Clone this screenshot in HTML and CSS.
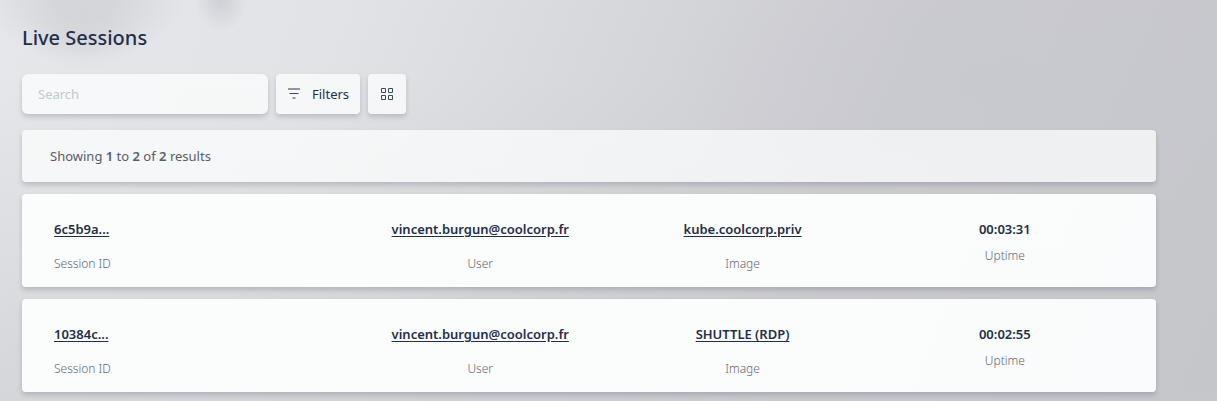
FILE: index.html
```html
<!DOCTYPE html>
<html lang="en">
<head>
<meta charset="utf-8">
<meta name="viewport" content="width=device-width, initial-scale=1">
<title>Live Sessions</title>
<link rel="stylesheet" href="styles.css">
</head>
<body>
<main class="page">
  <h1 class="title">Live Sessions</h1>
  <div class="toolbar">
    <input class="search surface" type="search" placeholder="Search" aria-label="Search">
    <button class="button surface" type="button">
      <svg class="icon" width="14" height="14" viewBox="0 0 14 14" fill="none" stroke="currentColor" aria-hidden="true"><path d="M1 2h12" stroke-width="1.4" stroke-opacity=".8"/><path d="M2.5 6.5h9"/><path d="M5.5 11h3" stroke-width="1.4" stroke-opacity=".8"/></svg>
      Filters
    </button>
    <button class="button button-icon surface" type="button" aria-label="Grid view">
      <svg class="icon" width="14" height="14" viewBox="0 0 14 14" fill="none" stroke="currentColor" aria-hidden="true"><path d="M1.5 1.5h4v4h-4zM8.5 1.5h4v4h-4zM1.5 8.5h4v4h-4zM8.5 8.5h4v4h-4z"/></svg>
    </button>
  </div>
  <p class="summary surface">Showing <strong>1</strong> to <strong>2</strong> of <strong>2</strong> results</p>
  <ul class="sessions">
    <li class="session surface">
      <div class="cell cell-start"><a class="value" href="#session-6c5b9a">6c5b9a...</a><span class="label">Session ID</span></div>
      <div class="cell"><a class="value" href="#user">vincent.burgun@coolcorp.fr</a><span class="label">User</span></div>
      <div class="cell"><a class="value" href="#kube">kube.coolcorp.priv</a><span class="label">Image</span></div>
      <div class="cell cell-tight"><span class="value">00:03:31</span><span class="label">Uptime</span></div>
    </li>
    <li class="session surface">
      <div class="cell cell-start"><a class="value" href="#session-10384c">10384c...</a><span class="label">Session ID</span></div>
      <div class="cell"><a class="value" href="#user">vincent.burgun@coolcorp.fr</a><span class="label">User</span></div>
      <div class="cell"><a class="value" href="#shuttle">SHUTTLE (RDP)</a><span class="label">Image</span></div>
      <div class="cell cell-tight"><span class="value">00:02:55</span><span class="label">Uptime</span></div>
    </li>
  </ul>
</main>
</body>
</html>
```
FILE: styles.css
```css
* {
  box-sizing: border-box;
}

body {
  margin: 0;
  min-height: 100vh;
  font-family: "Noto Sans", "Open Sans", sans-serif;
  font-size: 13px;
  line-height: 20px;
  color: #1f2f4a;
  background:
    radial-gradient(ellipse 100px 60px at 84px 0, rgba(208, 209, 213, 0.75) 30%, transparent 100%),
    radial-gradient(ellipse 60px 34px at 82px 36px, rgba(208, 209, 213, 0.5), transparent),
    radial-gradient(ellipse 26px 32px at 221px 0, rgba(204, 205, 213, 0.8) 10%, transparent),
    radial-gradient(ellipse 340px 150px at 1010px 80px, rgba(200, 200, 210, 0.6), transparent),
    linear-gradient(to bottom, transparent 20%, rgba(198, 199, 203, 0.5) 100%),
    linear-gradient(112deg, #e6e7ea 0%, #e2e3e6 25%, #d5d6da 48%, #cacacf 68%, #c5c6ca 100%);
}

.page {
  padding: 24px 61px 9px 22px;
}

.surface {
  border: 0;
  border-radius: 4px;
  background: rgba(254, 255, 255, 0.73);
  box-shadow: 0 3px 5px rgba(60, 64, 80, 0.22);
}

.title {
  margin: 0 0 22px;
  font-size: 20px;
  line-height: 28px;
  font-weight: 500;
}

.toolbar {
  display: flex;
  gap: 8px;
  margin-bottom: 16px;
}

.search {
  width: 246px;
  height: 40px;
  padding: 0 16px;
  border-radius: 6px;
  font: inherit;
  color: inherit;
}

.search::placeholder {
  color: #c2c8cd;
  opacity: 1;
}

.button {
  display: flex;
  align-items: center;
  justify-content: center;
  gap: 11px;
  height: 40px;
  padding: 0 11px;
  font: inherit;
  color: inherit;
}

.button-icon {
  padding: 0 12px;
}

.icon {
  display: block;
  color: #3c4a60;
}

.summary {
  margin: 0 0 12px;
  padding: 16px 28px;
  color: #555d69;
}

.summary strong {
  font-weight: 600;
}

.sessions {
  display: flex;
  flex-direction: column;
  gap: 12px;
  margin: 0;
  padding: 0;
  list-style: none;
}

.session {
  display: grid;
  grid-template-columns: 9fr 8fr 8fr 8fr;
  padding: 25px 20px 13px 32px;
  background: rgba(252, 253, 253, 0.97);
}

.cell {
  display: flex;
  flex-direction: column;
  align-items: center;
  gap: 15px;
}

.cell-start {
  align-items: flex-start;
}

.cell-tight {
  gap: 7px;
}

.value {
  font-weight: 600;
  color: #1f2f4a;
  text-underline-offset: 2px;
}

.label {
  font-size: 12px;
  font-weight: 300;
  color: #626973;
}
```
